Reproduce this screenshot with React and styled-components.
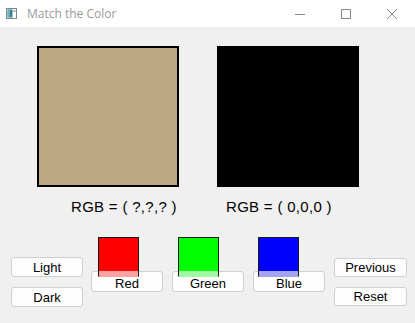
import React from "react";
import styled, { createGlobalStyle } from "styled-components";

const Global = createGlobalStyle`
  html, body { margin: 0; padding: 0; background: #f0f0f0; }
  body { width: 415px; height: 323px; overflow: hidden; font-family: "Liberation Sans", Arial, sans-serif; }
`;

const Window = styled.div`
  width: 415px;
  height: 323px;
  background: #f0f0f0;
  display: flex;
  flex-direction: column;
`;

const TitleBar = styled.div`
  height: 27px;
  background: #ffffff;
  display: flex;
  align-items: center;
  padding-left: 6px;
  box-sizing: border-box;
`;

const Title = styled.span`
  margin-left: 10px;
  font-family: "Open Sans", "Noto Sans", sans-serif;
  font-size: 12px;
  color: #9a9a9a;
  flex: 1;
  margin-top: -1px;
`;

const Controls = styled.div`
  display: flex;
  align-items: center;
`;

const ControlBtn = styled.div`
  width: 46px;
  height: 27px;
  display: flex;
  align-items: center;
  justify-content: center;
`;

const Body = styled.div`
  display: flex;
  flex-direction: column;
`;

const SwatchRow = styled.div`
  display: flex;
  gap: 38px;
  padding-left: 37px;
  margin-top: 19px;
`;

const BigSwatch = styled.div`
  width: 142px;
  height: 141px;
  box-sizing: border-box;
  background: ${(p) => p.$color};
  border: 2px solid #000;
`;

const LabelRow = styled.div`
  display: flex;
  margin-top: 11px;
  padding-left: 71px;
  gap: 51px;
`;

const Label = styled.div`
  font-family: "Liberation Sans", Arial, sans-serif;
  font-size: 15px;
  line-height: 18px;
  color: #000;
  width: 104px;
  white-space: nowrap;
  letter-spacing: 0.3px;
`;

const BottomRow = styled.div`
  display: flex;
  align-items: flex-start;
  padding-left: 11px;
  margin-top: 21px;
`;

const SideColumn = styled.div`
  display: flex;
  flex-direction: column;
  gap: 10px;
  margin-top: ${(p) => p.$top}px;
  margin-left: ${(p) => p.$left || 0}px;
`;

const Button = styled.button`
  width: ${(p) => p.$w || 72}px;
  height: ${(p) => p.$h || 20}px;
  box-sizing: border-box;
  background: #fdfdfd;
  border: 1px solid #d0d0d0;
  border-radius: 3px;
  padding: 0;
  font-family: "Liberation Sans", Arial, sans-serif;
  font-size: 13px;
  color: #000;
  display: flex;
  align-items: center;
  justify-content: center;
  position: relative;
  z-index: 1;
`;

const ColorGroup = styled.div`
  width: 72px;
  display: flex;
  flex-direction: column;
  margin-left: ${(p) => p.$left}px;
`;

const SmallSwatch = styled.div`
  width: 41px;
  height: 40px;
  box-sizing: border-box;
  margin-left: ${(p) => p.$off}px;
  border: 1px solid #1a1a1a;
  border-bottom-color: ${(p) => p.$light};
  background: linear-gradient(
    to bottom,
    ${(p) => p.$color} 0,
    ${(p) => p.$color} 33px,
    ${(p) => p.$light} 33px,
    ${(p) => p.$light} 100%
  );
  position: relative;
  z-index: 2;
`;

const ColorButton = styled(Button)`
  margin-top: -6px;
  height: 21px;
  padding-top: 4px;
`;

const AppIcon = () => (
  <svg width="11" height="11" viewBox="0 0 11 11">
    <rect x="0.5" y="0.5" width="10" height="10" fill="#fff" stroke="#7a8a94" />
    <rect x="1.5" y="1.5" width="5" height="8" fill="#3e7f8a" />
    <rect x="2" y="2" width="2" height="7" fill="#6fb1b8" />
    <rect x="7.5" y="2" width="2" height="2" fill="#9aaab4" />
  </svg>
);

const MinIcon = () => (
  <svg width="10" height="10" viewBox="0 0 10 10">
    <line x1="0" y1="5.5" x2="10" y2="5.5" stroke="#8a8a8a" strokeWidth="1" />
  </svg>
);

const MaxIcon = () => (
  <svg width="10" height="10" viewBox="0 0 10 10">
    <rect x="0.5" y="0.5" width="9" height="9" fill="none" stroke="#8a8a8a" strokeWidth="1" />
  </svg>
);

const CloseIcon = () => (
  <svg width="10" height="10" viewBox="0 0 10 10">
    <path d="M0 0 L10 10 M10 0 L0 10" stroke="#8a8a8a" strokeWidth="1" />
  </svg>
);

const colors = [
  { name: "Red", color: "#ff0000", light: "#f9a3a3", left: 8, off: 7 },
  { name: "Green", color: "#00ff00", light: "#a3f9a3", left: 9, off: 6 },
  { name: "Blue", color: "#0000ff", light: "#a3a3f0", left: 9, off: 5 },
];

export default function App() {
  return (
    <>
      <Global />
      <Window>
        <TitleBar>
          <AppIcon />
          <Title>Match the Color</Title>
          <Controls>
            <ControlBtn><MinIcon /></ControlBtn>
            <ControlBtn><MaxIcon /></ControlBtn>
            <ControlBtn><CloseIcon /></ControlBtn>
          </Controls>
        </TitleBar>
        <Body>
          <SwatchRow>
            <BigSwatch $color="#bea882" />
            <BigSwatch $color="#000000" />
          </SwatchRow>
          <LabelRow>
            <Label>RGB = ( ?,?,? )</Label>
            <Label>RGB = ( 0,0,0 )</Label>
          </LabelRow>
          <BottomRow>
            <SideColumn $top={20}>
              <Button>Light</Button>
              <Button>Dark</Button>
            </SideColumn>
            {colors.map((c) => (
              <ColorGroup key={c.name} $left={c.left}>
                <SmallSwatch $color={c.color} $light={c.light} $off={c.off} />
                <ColorButton>{c.name}</ColorButton>
              </ColorGroup>
            ))}
            <SideColumn $top={21} $left={9}>
              <Button $w={73} $h={19}>Previous</Button>
              <Button $w={73} $h={19}>Reset</Button>
            </SideColumn>
          </BottomRow>
        </Body>
      </Window>
    </>
  );
}
